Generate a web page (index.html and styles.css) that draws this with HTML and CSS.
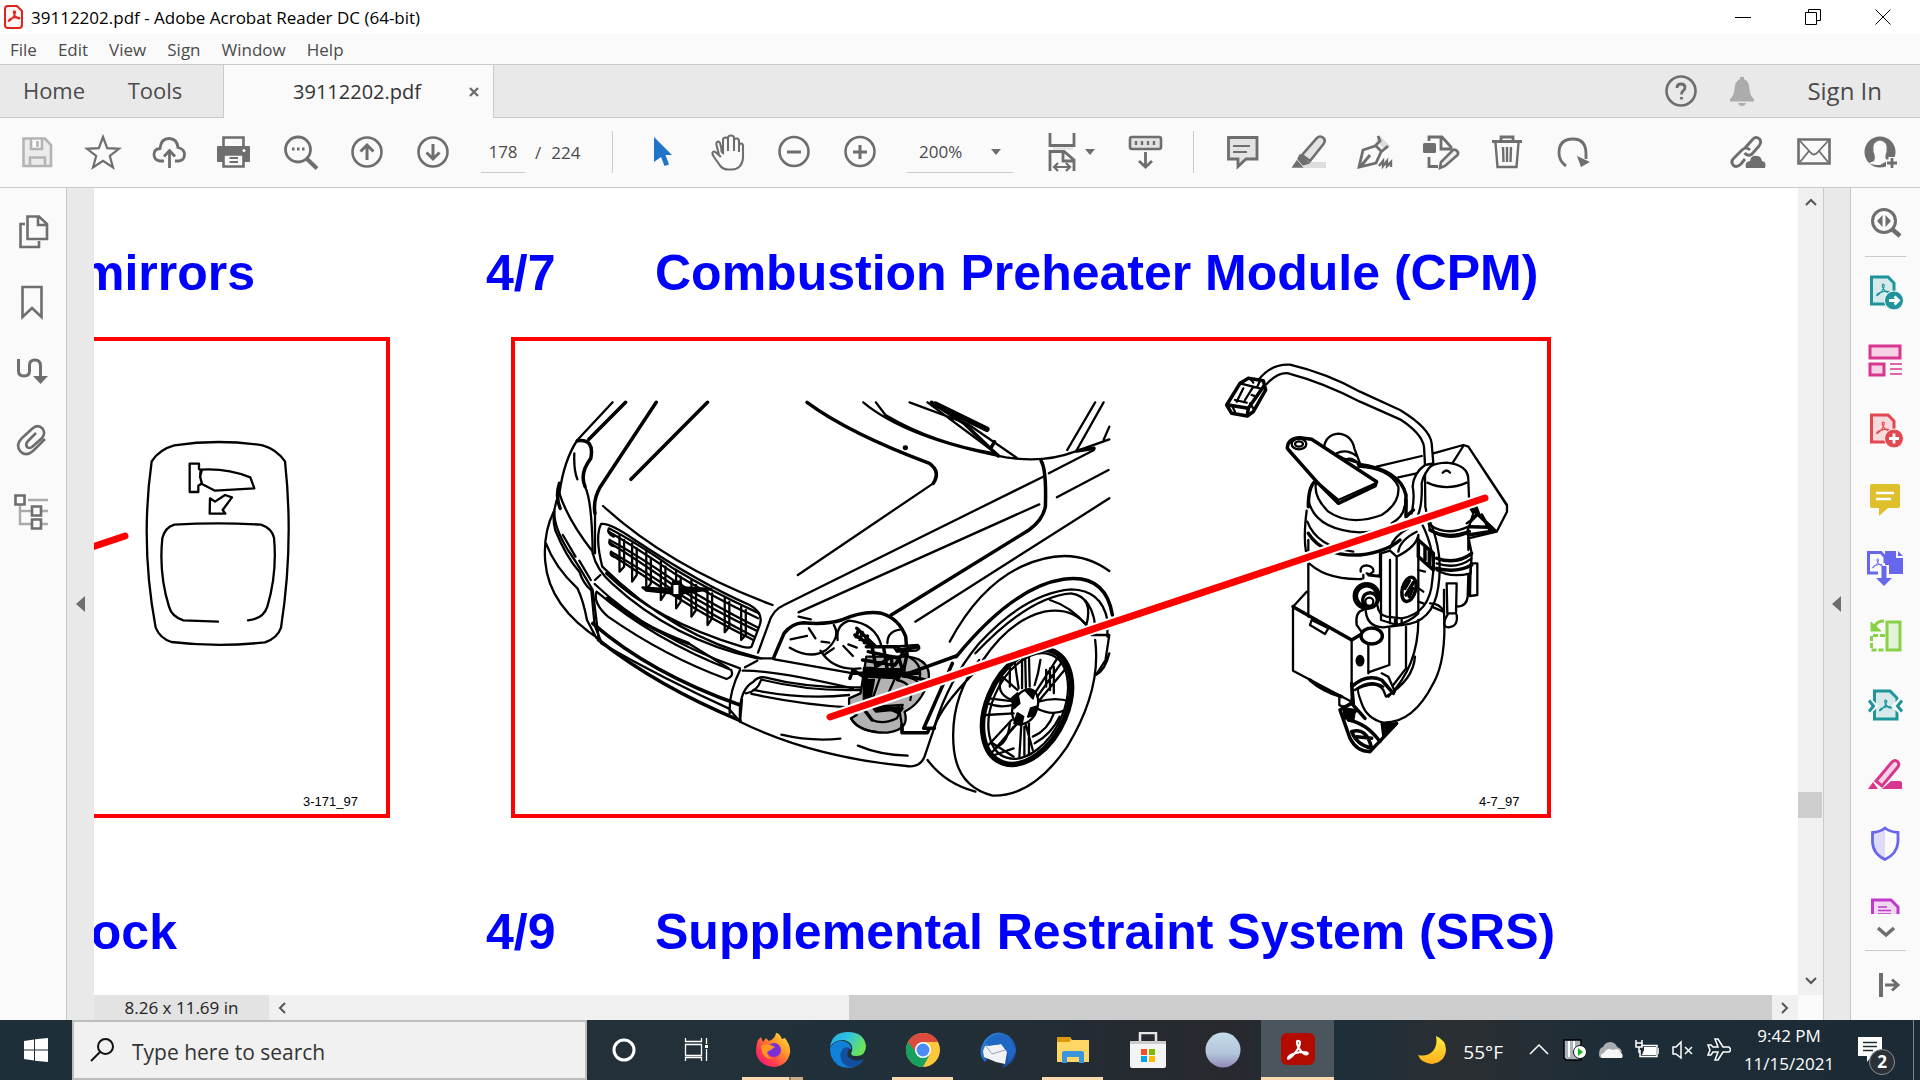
FILE: index.html
```html
<!DOCTYPE html>
<html lang="en">
<head>
<meta charset="utf-8">
<title>39112202.pdf - Adobe Acrobat Reader DC (64-bit)</title>
<link rel="stylesheet" href="styles.css">
</head>
<body>
<svg class="defs" aria-hidden="true">
  <defs>
    <path id="acro" d="M11 2C13 2 11 9 7 13C3 18 0 19 1 17C2 14 12 11 17 12C21 13 18 15 15 13C11 10 9 5 9 3Q9 1 11 2Z"/>
    <linearGradient id="ff" x1="1" y1="0" x2="0" y2="1"><stop offset="0" stop-color="#fff44f"/><stop offset=".35" stop-color="#ff9a26"/><stop offset=".7" stop-color="#ff3750"/><stop offset="1" stop-color="#e3128d"/></linearGradient>
    <linearGradient id="edge" x1="0" y1="0" x2="1" y2=".4"><stop offset="0" stop-color="#2aa4e8"/><stop offset=".5" stop-color="#2fc4df"/><stop offset="1" stop-color="#6be35a"/></linearGradient>
    <linearGradient id="orb" x1="0" y1="0" x2="0" y2="1"><stop offset="0" stop-color="#c6dce8"/><stop offset=".6" stop-color="#b3c5db"/><stop offset="1" stop-color="#9288b8"/></linearGradient>
    <linearGradient id="moon" x1="0" y1="0" x2="0" y2="1"><stop offset="0" stop-color="#ffee3a"/><stop offset="1" stop-color="#ffae1e"/></linearGradient>
    <linearGradient id="bird" x1="0" y1="0" x2="1" y2="1"><stop offset="0" stop-color="#2a8be0"/><stop offset="1" stop-color="#1a3f9c"/></linearGradient>
  </defs>
</svg>

<header class="titlebar">
  <svg class="app-icon" viewBox="0 0 20 26"><path d="M4 2H13L18 7V21Q18 24 15 24H4Q1 24 1 21V5Q1 2 4 2Z" fill="#fff5f5" stroke="#e2231a" stroke-width="2"/><use href="#acro" transform="translate(4 6) scale(.62)" fill="none" stroke="#e2231a" stroke-width="2.4"/></svg>
  <span class="app-title">39112202.pdf - Adobe Acrobat Reader DC (64-bit)</span>
  <div class="window-controls">
    <button aria-label="Minimize"><svg viewBox="0 0 16 16"><path d="M0 8.500H16" stroke="#000"/></svg></button>
    <button aria-label="Restore"><svg viewBox="0 0 16 16"><path d="M.5 3.500H11.500V15.500H.5ZM3.500 3V.5H15.500V11.500H12" fill="none" stroke="#000"/></svg></button>
    <button aria-label="Close"><svg viewBox="0 0 16 16"><path d="M.5 .5L15.500 15.500M15.500 .5L.5 15.500" stroke="#000"/></svg></button>
  </div>
</header>

<nav class="menubar">
  <button>File</button><button>Edit</button><button>View</button><button>Sign</button><button>Window</button><button>Help</button>
</nav>

<div class="tabbar">
  <button class="tab-home">Home</button>
  <button class="tab-tools">Tools</button>
  <div class="doc-tab"><span>39112202.pdf</span><button aria-label="Close tab"><svg viewBox="0 0 12 12"><path d="M2 2L10 10M10 2L2 10" stroke="#6e6e6e" stroke-width="2.400"/></svg></button></div>
  <div class="tab-right">
    <button aria-label="Help"><svg class="icon" viewBox="0 0 40 40"><circle cx="20" cy="20" r="14.500" stroke-width="2.600"/><path d="M16 17Q16 13 20 13Q24 13 24 16.500Q24 18.500 22 20Q20.500 21 20.500 23.500M20.500 26V28.600" stroke-width="2.800"/></svg></button>
    <button aria-label="Notifications"><svg class="icon" viewBox="0 0 40 40"><path d="M18 8V6H22V8Q27 10 27.500 18Q28 25 32 28V30.500H8V28Q12 25 12.500 18Q13 10 18 8ZM16 32H24Q23 35 20 35Q17 35 16 32Z" fill="#acacac" stroke="none"/></svg></button>
    <a class="sign-in" href="#">Sign In</a>
  </div>
</div>

<div class="toolbar">
  <button aria-label="Save"><svg class="icon pale" viewBox="0 0 40 40"><path d="M6.500 6.500H28L34 13V34H6.500ZM14 7V17H25V7M20.500 9V15M13 34V25.500H28V34" fill="#ececec" stroke-width="2.600"/></svg></button>
  <button aria-label="Star"><svg class="icon" viewBox="0 0 40 40"><path d="M20 5L24.200 16.200L36 16.800L26.800 24L30 35.500L20 28.800L10 35.500L13.200 24L4 16.800L15.800 16.200Z" stroke-width="2.200"/></svg></button>
  <button aria-label="Upload"><svg class="icon" viewBox="0 0 40 40"><path d="M15 29H11Q5 28 5 22.500Q5 17 11 16.500Q12 6.500 20 6.500Q28 6.500 29 15.500Q35.500 17 35.500 22.500Q35.500 28 30 29H26" stroke-width="2.800"/><path d="M20.500 36V19M15 24.500L20.500 18.500L26 24.500" stroke-width="2.800"/></svg></button>
  <button aria-label="Print"><svg class="icon" viewBox="0 0 40 40"><path d="M3 15H34V29H29V24H9V29H3Z" fill="#6e6e6e" stroke-linejoin="round" stroke-width="2"/><path d="M8.500 14V5.500H28.500V14" stroke-width="2.600"/><path d="M8.500 22.500H28.500V34.500H8.500Z" fill="#fafafa" stroke-width="2.600"/><path d="M14.500 26H23M14.500 30H23" stroke-width="1.800"/><circle cx="29" cy="18.500" r="1.500" fill="#fff" stroke="none"/></svg></button>
  <button aria-label="Find"><svg class="icon" viewBox="0 0 40 40"><circle cx="17" cy="17.500" r="12.500" stroke-width="2.800"/><path d="M26 27L36 36.500" stroke-width="4"/><path d="M11 17H13.500M16 17H18.500M21 17H23.500" stroke-width="2.800"/></svg></button>
  <button aria-label="Previous page"><svg class="icon" viewBox="0 0 40 40"><circle cx="20" cy="20" r="14.500" stroke-width="2.600"/><path d="M20 28V13M13.500 19.500L20 13L26.500 19.500" stroke-width="3"/></svg></button>
  <button aria-label="Next page"><svg class="icon" viewBox="0 0 40 40"><circle cx="20" cy="20" r="14.500" stroke-width="2.600"/><path d="M20 12V27M13.500 20.500L20 27L26.500 20.500" stroke-width="3"/></svg></button>
  <div class="page-nav"><input aria-label="Page number" value="178"><span>/</span><span>224</span></div>
  <i class="sep"></i>
  <button aria-label="Select"><svg class="icon" viewBox="0 0 40 40"><path d="M12 5L30 23H23.500L27 32.500L22.500 34L19 25L12 30Z" fill="#2074c9" stroke="none"/></svg></button>
  <button aria-label="Pan"><svg class="icon" viewBox="0 0 40 40"><path d="M13 25L8 20.500Q5.500 18.500 4.500 20.500Q4 22 6 25L12 33.500Q15 37.500 20 37.500H24Q34 37 35 26V14Q35 11.500 33 11.500Q31 11.500 31 14V20M31 17V9Q31 6.500 28.500 6.500Q26 6.500 26 9V19M26 12V6Q26 3.500 23 3.500Q20 3.500 20 6V19M20 10V8Q20 5.500 17.500 5.500Q15 5.500 15 8V21Q13 20 13.500 17L12 11Q11 9 9 10Q8 11 8.500 13L11 23" stroke-width="2.100"/></svg></button>
  <button aria-label="Zoom out"><svg class="icon" viewBox="0 0 40 40"><circle cx="20" cy="19.500" r="14.500" stroke-width="2.600"/><path d="M13 20H27" stroke-width="3"/></svg></button>
  <button aria-label="Zoom in"><svg class="icon" viewBox="0 0 40 40"><circle cx="20" cy="19.500" r="14.500" stroke-width="2.600"/><path d="M13 20H27M20 13V27" stroke-width="3"/></svg></button>
  <label class="zoom"><select aria-label="Zoom level"><option>200%</option></select><svg viewBox="0 0 10 6"><path d="M0 0H10L5 6Z" fill="#6e6e6e"/></svg></label>
  <button class="fit" aria-label="Fit width"><svg class="icon" viewBox="0 0 40 40"><path d="M8 1V13.500H32V1M8 39V19.500H22L32 28V39M21 20V29H31" stroke-width="2.800"/><path d="M13 35H27M16 31L12 35L16 39M24 31L28 35L24 39" stroke-width="2.200"/><path d="M11 16.500H31" stroke="#ddd" stroke-width="2"/></svg><svg class="caret" viewBox="0 0 10 6"><path d="M0 0H10L5 6Z" fill="#6e6e6e"/></svg></button>
  <button aria-label="Scrolling"><svg class="icon" viewBox="0 0 40 40"><rect x="5" y="5" width="31" height="12" rx="2" fill="#e3e3e3" stroke-width="2.600"/><path d="M11 9V13M17 9V13M23 9V13M29 9V13" stroke-width="2.400"/><path d="M20.500 20V35M14 29L20.500 35L27 29" stroke-width="2.800"/></svg></button>
  <i class="sep"></i>
  <button aria-label="Comment"><svg class="icon" viewBox="0 0 40 40"><path d="M5.500 5.500H34V27H23L15 34.500V27H5.500Z" fill="#e3e3e3" stroke-width="2.800"/><path d="M10 14H27M10 20H24" stroke-width="2"/></svg></button>
  <button aria-label="Highlight"><svg class="icon" viewBox="0 0 40 40"><path d="M13 36L19 30H37V36Z" fill="#ddd" stroke="none"/><path d="M13 23L28 6Q31 3 34.500 6Q37 8.500 34.500 12L21 29Z" fill="#e3e3e3" stroke-width="2.600"/><path d="M11 23L20 31L14 33L9 27ZM4 35L8 29L13 35Z" fill="#6e6e6e" stroke-width="1.500"/></svg></button>
  <button aria-label="Sign"><svg class="icon" viewBox="0 0 40 40"><path d="M24 3L35 14L31 18L21 9Z" fill="#ddd" stroke="none"/><path d="M23 4L25 9L20 14L8 18L4 35L21 31L26 20L33 14M20 13L27 20M6 34L15 23" stroke-width="2.800"/><path d="M24 34L28 29V34L32 29V34L36 30V35" stroke-width="2.400"/></svg></button>
  <button aria-label="Edit"><svg class="icon" viewBox="0 0 40 40"><rect x="2" y="11" width="13" height="10" rx="1.500" fill="#6e6e6e" stroke="none"/><path d="M8 9V5H21L30 15V17H20V6M8 25V34.500H17" stroke-width="2.800"/><path d="M19 36L20 30L32 18Q34 17 36 19Q38 21 36.500 23L24 34Z" fill="#eee" stroke-width="2.600"/></svg></button>
  <button aria-label="Delete"><svg class="icon" viewBox="0 0 40 40"><path d="M5 9.500H35M14 9V5H26V9" stroke-width="2.800"/><path d="M8.500 11L10.500 35H29.500L31.500 11M16 15L16.500 30M20 15V30M24 15L23.500 30" stroke-width="2.400"/></svg></button>
  <button aria-label="Rotate"><svg class="icon" viewBox="0 0 40 40"><path d="M13 34Q6 29 6 21Q6 7 20 7Q33 7 33 22V27" stroke-width="2.800"/><path d="M24 24L37 30L28 35Z" fill="#6e6e6e" stroke="none"/></svg></button>
  <div class="share">
    <button aria-label="Share link"><svg class="icon" viewBox="0 0 40 40"><path d="M17 16L25 7Q28 4 31.500 7Q34 10 31 14L24 22Q20 25 16.500 21M22 18Q18 14 14 18L6 26Q2 30 5.500 33.500Q9 36 13 32L17 27" stroke-width="2.900"/><path d="M18 36Q16 30 22 29Q23 23 29 24Q33 24 34 29Q39 30 37 36Z" fill="#6e6e6e" stroke="none"/></svg></button>
    <button aria-label="Email"><svg class="icon" viewBox="0 0 40 40"><path d="M4.500 7.500H35.500V31.500H4.500Z" stroke-width="2.600"/><path d="M6 9L17 21Q20 24 23 21L34 9M6 30L15 19M34 30L25 19" stroke-width="1.800"/></svg></button>
    <button aria-label="Invite people"><svg class="icon" viewBox="0 0 40 40"><circle cx="20" cy="20" r="14.500" fill="#6e6e6e" stroke-width="2"/><path d="M14 29Q16 25 13.500 20Q12 9 20 8.500Q28 9 26.500 20Q24 25 27 29L20 33Q12 33 9 31Z" fill="#fafafa" stroke="none"/><path d="M26 31H38M32 25V37" stroke="#fafafa" stroke-width="7"/><path d="M27 31H37M32 26V36" stroke-width="2.800"/></svg></button>
  </div>
</div>

<main class="workspace">
  <aside class="left-rail">
    <button aria-label="Page thumbnails"><svg class="icon" viewBox="0 0 40 40"><path d="M14.500 4.500H26L34 12V27H14.500ZM25 5V13H33" stroke-width="2.600"/><path d="M12 12H7.500V35H26V29" stroke-width="2.600"/></svg></button>
    <button aria-label="Bookmarks"><svg class="icon" viewBox="0 0 40 40"><path d="M9.500 5H28.500V35L19 26L9.500 35Z" stroke-width="2.600"/></svg></button>
    <button aria-label="Signatures"><svg class="icon" viewBox="0 0 40 40"><path d="M5.500 7V19Q5.500 24 11 24Q16.500 24 16.500 19V13Q16.500 8 22 8Q27.500 8 27.500 14V24" stroke-width="3"/><path d="M20 24H35L27.500 32Z" fill="#6e6e6e" stroke="none"/></svg></button>
    <button aria-label="Attachments"><svg class="icon" viewBox="0 0 40 40"><path d="M32 17L20 29Q13 35 7.500 29.500Q2 23 9 16L20 6Q25 2 29.500 6.500Q33 11 29 16L19 25Q16 27 14 25Q12 22 15 19L23 11" stroke-width="2.600"/></svg></button>
    <button aria-label="Layers"><svg class="icon" viewBox="0 0 40 40"><path d="M15 8H35M7 13V32H18M7 19H18M29 19H35M29 32H35" stroke="#aaa" stroke-width="2.400"/><path d="M2.500 3.500H11.500V12.500H2.500ZM19 14.500H28V23.500H19ZM19 27.500H28V36.500H19Z" stroke-width="2.600"/></svg></button>
  </aside>
  <button class="pane-toggle left" aria-label="Expand navigation pane"><svg viewBox="0 0 10 16"><path d="M9 0V16L0 8Z" fill="#6e6e6e"/></svg></button>

  <div class="viewer">
    <div class="page-view">
      <section class="col-a">
        <h2 class="cut wide"><span>mirrors</span></h2>
        <figure class="panel open">
          <svg viewBox="94 341 292 473">
            <g class="ink" transform="translate(0 190) scale(.33333)">
              <path d="M455 814Q478 778 523 766Q655 746 788 766Q830 778 855 814Q882 1062 843 1313Q832 1345 795 1357Q655 1373 514 1356Q480 1345 467 1313Q420 1062 455 814Z"/>
              <path d="M654 1295L550 1291Q515 1280 507 1250Q476 1150 487 1045Q495 1012 523 1004Q655 996 783 1004Q815 1015 822 1043Q832 1150 802 1250Q790 1287 744 1291"/>
              <path d="M569 821H597V837L605 843L600 860L606 880L595 887V906H569ZM603 839Q680 834 751 862L763 895L645 902L606 882Q597 858 603 839"/>
              <path d="M630 925L645 935L675 915L696 922L668 960L676 971H629Z"/>
            </g>
            <path class="leader" d="M80 551L125 536"/>
            <text x="303" y="806" class="fig-no">3-171_97</text>
          </svg>
        </figure>
        <h2 class="cut narrow"><span>ock</span></h2>
      </section>
      <section class="col-b">
        <h2><span class="ref">4/7</span><span>Combustion Preheater Module (CPM)</span></h2>
        <figure class="panel">
          <svg viewBox="515 341 1032 473">
            <g class="ink" transform="translate(520 380) scale(.38267 .33333)">
              <!-- bonnet and windscreen -->
              <path d="M242 67L150 180Q115 240 103 340M276 67L182 175" />
              <path class="b" d="M356 67L210 320Q190 360 196 400M276 67L180 178M490 67L290 298"/>
              <path d="M196 395V520"/>
              <path class="b" d="M750 67Q860 160 1070 250Q1100 275 1080 310"/>
              <path d="M1080 310L726 585M217 378Q390 560 660 675"/>
              <path d="M897 67Q1010 175 1270 232Q1370 250 1450 215L1540 178M930 67L955 105Q1080 190 1240 220M1018 67L1170 132L1300 235M1065 67L1250 225M1430 210L1503 67M1455 210L1525 67M1525 180L1540 140"/>
              <path class="bb" d="M1085 72L1220 148"/>
              <path class="b" d="M1075 67L1160 130L1250 228M1240 185L1230 205M1455 213L1500 205"/>
              <circle cx="1007" cy="203" r="4" fill="#000"/>
              <path class="b" d="M1362 243Q1376 270 1373 380Q1366 420 1330 450L970 705"/>
              <path d="M1382 280L1500 210M1367 290L690 675Q660 690 650 730L622 818M1357 373L728 697M1403 352L1538 270M1540 355L1033 725"/>
              <!-- left flank -->
              <path class="b" d="M150 182Q195 175 185 235Q155 280 170 320M103 310Q92 350 105 385"/>
              <path d="M170 320Q188 360 190 520M142 220Q140 270 150 298M103 340Q125 420 190 515M88 395Q60 460 66 545Q75 680 210 780M90 395Q88 440 125 510Q150 550 190 630L205 770M112 465L145 530M68 490Q90 560 150 625Q165 660 175 720L200 775M155 542L185 600M196 600L210 585"/>
              <path d="M103 340Q80 400 92 450Q120 530 155 575Q165 610 185 630"/>
              <!-- grille surround -->
              <path d="M630 835Q400 770 215 560Q195 470 212 432Q235 428 300 480Q470 610 600 675Q640 700 625 740L605 800Q600 806 580 800Q350 720 225 580"/>
              <path d="M190 520Q200 570 240 610Q400 780 620 835L665 835"/>
              <!-- grille bars -->
              <path d="M232 445Q300 485 400 565Q500 635 625 700M232 455Q300 500 400 578Q500 648 622 715M234 480Q300 520 400 600Q500 672 620 742M236 490Q300 535 400 615Q500 688 618 752M238 515Q320 570 400 630Q500 705 612 770M240 525Q320 585 400 645Q500 718 610 780M232 445Q226 460 245 470M235 480Q228 495 250 500M238 515Q232 530 260 535"/>
              <path d="M260 465V575L272 560V480M293 490V605L305 585V505M330 515V630L342 610V535M368 545V660L380 640V560M408 570V685L420 665V590M448 600V710L460 690V615M490 628V735L502 715V640M535 655V757L547 740V665M578 680V780L590 765V690"/>
              <path d="M320 622L395 628L400 605H418L425 622L500 627L425 640L415 655L396 640L330 632Z" fill="#000"/>
              <path d="M401 615H414V642H401Z" fill="#fff" stroke="none"/>
              <!-- bumper -->
              <path d="M195 612Q340 770 575 865M200 635Q190 670 230 710Q380 830 540 897Q560 890 552 870Q350 780 200 635"/>
              <path class="b" d="M228 655Q310 735 440 790M190 730Q340 880 575 975M205 780Q360 920 575 1022"/>
              <path d="M440 790L545 865M212 790Q380 900 545 985L575 1025L580 960M575 870Q545 940 548 1000M186 625L195 735L210 780M588 862L620 842M582 872Q660 870 870 925"/>
              <path d="M575 1020Q570 930 610 905Q620 890 640 892Q750 925 890 922M635 900Q760 935 890 930M610 930Q740 960 860 945M605 942Q740 975 860 982M590 940Q620 935 630 900M665 838L860 878"/>
              <path d="M575 1025Q760 1130 1010 1158Q1050 1165 1060 1120L1085 1035M683 1064Q760 1085 837 1076M883 1097Q940 1125 1013 1127"/>
              <!-- headlamp -->
              <path class="b" d="M662 835L690 760Q710 730 740 728Q800 735 840 720Q900 690 945 700Q990 715 1008 770L1015 880"/>
              <path d="M728 710L760 718M707 778L750 768M755 745L772 775M705 803Q760 840 800 810Q840 770 820 735M830 780Q825 735 860 722Q930 730 945 800M785 812Q820 875 890 865M788 785L808 788M845 798L870 828M798 822L820 805M960 790Q960 750 1000 748M858 793L880 803"/>
              <!-- heater unit behind the bumper -->
              <path d="M975 800L1040 795Q1050 805 1035 812L985 815ZM1015 830Q1075 840 1068 900Q1050 970 1005 995Q1020 1050 960 1058Q890 1060 865 1015L880 1005L860 990L860 955L890 940L905 830Z" fill="#b2b2b2"/>
              <path class="b" d="M880 745L930 800M875 765L915 795M885 750L878 770M895 758L888 778M908 768L900 788M905 800H985L1010 830L1000 885L1060 900M910 815L990 835L1000 870L900 865V990L920 1020M895 840L980 855L1000 820M920 800L930 860L970 830L975 880M865 880H1040M862 895L870 870L905 895M905 910L900 985M950 800L960 870M1040 800L985 812"/>
              <path d="M940 895L920 960H955L980 895M1000 890Q1050 895 1045 930M985 900Q1030 910 1020 960M930 980L1000 975L985 1015Q950 1035 920 1020M865 1015Q880 1050 930 1055M1015 830Q1050 850 1045 890M990 980L1000 1050"/>
              <path d="M905 870H1005L990 895L905 890ZM905 900H925L912 980H902ZM920 980L1000 985L990 1000L970 990L930 995Z" fill="#000"/>
              <path class="b" d="M1015 880L1140 828M998 1035V1058H1065L1070 1045M1130 850L1055 1045H1083"/>
              <!-- wheel arch -->
              <path d="M1540 573Q1440 490 1310 560Q1200 620 1123 785"/>
              <path class="b" d="M1548 705Q1530 580 1420 598Q1290 620 1140 830"/>
              <path d="M1535 720Q1520 630 1440 628Q1320 640 1200 790Q1120 900 1083 1040M1440 640Q1500 650 1505 760M1440 640Q1330 650 1190 820M1480 735Q1500 650 1440 640M1385 660Q1440 680 1480 735"/>
              <path d="M1480 735Q1440 680 1370 695Q1280 720 1210 840"/>
              <!-- tyre and rim -->
              <path d="M1200 840Q1120 960 1134 1110Q1145 1220 1235 1247Q1340 1250 1430 1100Q1520 930 1503 780M1065 1140Q1110 1210 1190 1235M1185 880Q1100 980 1083 1040M1493 765H1540L1530 840L1505 885M1540 820Q1530 870 1505 885M1535 720V770"/>
              <ellipse class="bb" cx="1325" cy="980" rx="105" ry="180" transform="rotate(20 1325 980)"/>
              <ellipse cx="1328" cy="978" rx="93" ry="165" transform="rotate(20 1328 978)"/>
              <ellipse cx="1320" cy="980" rx="32" ry="54" transform="rotate(16 1320 980)"/>
              <path d="M1303 925L1292 840M1312 925V830M1332 920L1330 825M1322 925L1320 825M1345 940L1410 825M1352 950L1420 840M1358 960L1430 860M1295 965L1225 955M1290 975Q1250 985 1222 970M1290 1000L1218 1005M1285 1020L1220 1100M1300 1030L1235 1115M1290 1040L1245 1105M1310 1035L1305 1130M1318 1040V1125M1330 1030V1125M1322 1035L1340 1110M1350 985Q1390 1010 1425 990M1355 965Q1400 950 1438 965M1375 920V870M1395 940V860M1385 930V865"/>
              <path d="M1300 930L1260 890Q1240 940 1285 960M1280 920V850M1340 1070Q1380 1050 1395 1000M1345 1090Q1390 1060 1410 1010M1245 1100Q1275 1090 1280 1030M1240 1125L1290 1105M1360 840Q1355 880 1345 915M1235 1090L1290 1130"/>
              <path d="M1285 955L1300 940L1305 970L1290 985ZM1320 930L1345 935L1340 955ZM1300 1000L1315 1010L1310 1035L1292 1030ZM1335 985L1350 980L1345 1005L1328 1010Z" fill="#000"/>
            </g>
            <g class="ink" transform="translate(1200 340) scale(.33333)">
              <!-- mounting bracket behind -->
              <path d="M530 380L665 348M595 412L660 398M700 340L790 315L805 320L921 495V515L890 575L805 595M790 318L757 370M805 320L920 495"/>
              <path class="b" d="M820 510L885 572L805 585M820 480L835 520L800 555M845 525L870 570M810 560L870 562"/>
              <!-- cable -->
              <path d="M175 120Q215 70 270 74Q380 100 480 155L600 210Q690 265 695 310L700 370M200 132Q235 95 265 100Q370 128 480 185L600 238Q665 280 672 320L675 375"/>
              <path class="b" d="M80 195L120 130L145 115L190 122L197 150L160 215L142 228L95 220ZM85 195L145 205L142 225M145 205L190 140"/>
              <path d="M110 185L130 145M120 130L180 145M135 180L160 140M95 195L105 215M150 115L160 128M180 122L172 140M105 180L140 188M155 165L170 170M150 190L160 205"/>
              <!-- lid and arm -->
              <path d="M372 325Q375 285 415 281Q455 285 463 325L480 370L430 355ZM410 340Q440 325 472 350M425 365Q450 345 475 370" fill="#fff"/>
              <path class="b" d="M345 425Q325 440 325 500M475 373Q600 390 618 465L617 500"/>
              <path d="M348 430Q340 470 385 515Q450 560 545 525Q600 490 595 440Q570 385 475 380M325 480Q345 570 480 577Q540 575 560 565M575 550Q610 530 613 500M320 512Q310 590 318 635"/>
              <path class="b" d="M325 580Q370 650 480 645Q560 635 600 600"/>
              <path d="M322 545Q350 620 460 635M325 600V830M318 660Q370 720 485 717M500 700Q525 710 540 705"/>
              <path class="b" d="M262 325Q262 295 300 293L335 298L530 425L525 438L415 490L350 425Z" fill="#fff"/>
              <ellipse cx="297" cy="312" rx="22" ry="16"/><ellipse cx="297" cy="312" rx="12" ry="8"/>
              <path d="M264 330L350 425L415 480L527 430"/>
              <!-- side canister -->
              <path d="M675 410Q675 370 740 368Q806 375 805 420L808 500L820 520L800 580Q740 605 690 570L676 500Z" fill="#fff"/>
              <path d="M682 428Q740 455 800 428M728 398Q740 385 750 398"/>
              <path class="b" d="M690 570Q740 600 808 575M710 655Q770 675 815 640M710 685Q770 700 815 675"/>
              <path d="M690 555Q740 590 805 560M805 590L815 640L812 700Q750 715 710 690M710 670Q770 690 815 655M805 590V630M812 500L830 515M800 550L820 535"/>
              <path d="M812 670H832V765L810 768ZM740 730H770L768 820H742ZM745 820Q720 860 745 862Q775 860 770 825M805 705L803 770Q800 800 770 800M732 815V750"/>
              <path d="M635 520Q645 470 638 440Q640 400 675 375L700 370Q670 400 665 430Q668 500 650 535" fill="#fff"/>
              <path class="b" d="M618 480V530L640 510"/>
              <!-- hoses -->
              <path d="M665 550Q710 640 697 720Q690 820 605 835M690 545Q730 640 715 740Q700 850 605 855M570 625Q580 590 625 565M595 635Q600 600 650 575"/>
              <path class="b" d="M655 600L700 640V690L655 650ZM675 620V660M688 630V675"/>
              <!-- valve block -->
              <path d="M543 640L570 632L590 650V855M543 640V840L590 855M570 660V850M590 650Q650 620 655 585V820Q630 845 590 855M540 640V710"/>
              <ellipse class="b" cx="627" cy="748" rx="20" ry="37" transform="rotate(15 627 748)"/><path class="b" d="M618 765L640 728M628 770L638 745M615 745L628 722"/>
              <path d="M482 695Q480 677 500 676Q523 680 520 695L505 706L540 710M490 705V715M655 690L675 695M655 745L670 755M655 785L670 790"/>
              <!-- clamp and elbow -->
              <circle class="bb" cx="500" cy="768" r="34"/><circle class="b" cx="510" cy="780" r="22" fill="#fff"/><circle cx="508" cy="785" r="12"/>
              <path d="M497 800Q495 860 550 862L605 855V835L560 830Q535 825 532 795M490 810Q465 815 470 855L488 880M585 835V858"/>
              <ellipse class="b" cx="515" cy="888" rx="32" ry="24" fill="#fff"/>
              <!-- control box -->
              <path class="b" d="M279 800L455 900M455 900L480 885"/>
              <path d="M455 900V1085M279 800L320 755M279 805V992L455 1085M505 915V1000M568 865V975L505 997M335 840L330 855L375 882L385 865Z"/>
              <ellipse cx="480" cy="962" rx="10" ry="14" fill="#000"/>
              <path class="b" d="M330 1020Q370 1055 425 1070"/>
              <path d="M618 860V985L580 1035M655 840Q655 980 565 1070M732 815Q740 960 700 1030Q640 1150 550 1148Q500 1135 485 1090Q470 1050 475 1045Q530 1020 550 1050L558 1070Q640 1020 645 950"/>
              <path class="b" d="M455 1040Q500 1000 545 1020L580 1060M455 1030L460 1090"/>
              <path d="M545 1000L565 1010L585 1055M465 1050Q510 1015 550 1040M690 790Q720 790 732 815M695 800L730 815"/>
              <path class="b" d="M420 1110L455 1090L495 1135M420 1110L450 1195Q470 1235 510 1235L590 1150M445 1140Q500 1150 540 1205M455 1175Q500 1160 515 1225Q470 1215 455 1175M470 1190L515 1195M450 1125L470 1110"/>
              <path d="M545 1150H590L550 1190ZM430 1105L465 1110L460 1140L435 1135Z" fill="#000"/>
              <path d="M418 1070V1095Q430 1105 450 1090"/>
            </g>
            <path class="halo" d="M830 717L1485 498"/>
            <path class="leader" d="M830 717L1485 498"/>
            <text x="1479" y="806" class="fig-no">4-7_97</text>
          </svg>
        </figure>
        <h2><span class="ref">4/9</span><span>Supplemental Restraint System (SRS)</span></h2>
      </section>
    </div>
    <div class="vscroll">
      <button aria-label="Scroll up"><svg class="arrow" viewBox="0 0 12 12"><path d="M1 9L6 4L11 9"/></svg></button>
      <div class="vtrack"><i></i></div>
      <button aria-label="Scroll down"><svg class="arrow" viewBox="0 0 12 12"><path d="M1 3L6 8L11 3"/></svg></button>
    </div>
    <div class="hscroll">
      <span class="page-size">8.26 x 11.69 in</span>
      <button aria-label="Scroll left"><svg class="arrow" viewBox="0 0 12 12"><path d="M9 1L4 6L9 11"/></svg></button>
      <div class="htrack"><i></i></div>
      <button aria-label="Scroll right"><svg class="arrow" viewBox="0 0 12 12"><path d="M3 1L8 6L3 11"/></svg></button>
    </div>
  </div>

  <button class="pane-toggle right" aria-label="Expand tools pane"><svg viewBox="0 0 10 16"><path d="M9 0V16L0 8Z" fill="#6e6e6e"/></svg></button>
  <aside class="right-rail">
    <button class="find" aria-label="Find tool"><svg class="icon" viewBox="0 0 40 40"><circle cx="18" cy="18" r="11.500" stroke-width="3"/><path d="M26 26L34 33" stroke-width="4.500"/><path d="M16.500 12V24L11 18ZM19.500 12V24L25 18Z" fill="#6e6e6e" stroke="none"/></svg></button>
    <button aria-label="Export PDF"><svg class="icon teal" viewBox="0 0 40 40"><path d="M6.500 5H23L29 11V32H6.500Z" class="tint" stroke-width="3"/><use href="#acro" transform="translate(11 11) scale(.7)" stroke-width="1.600"/><circle cx="29" cy="28.500" r="9.500" class="disc"/><path d="M24 28.500H33M29.500 24.500L33.500 28.500L29.500 32.500" stroke="#fff" stroke-width="2.800"/></svg></button>
    <button aria-label="Organize pages"><svg class="icon pink" viewBox="0 0 40 40"><path d="M5 5H35V17H5ZM5 23H19V34H5Z" class="tint" stroke-width="3"/><path d="M25 23H37M25 28H37M25 33H37" stroke-width="1.500"/></svg></button>
    <button aria-label="Create PDF"><svg class="icon red" viewBox="0 0 40 40"><path d="M6.500 5H23L29 11V32H6.500Z" class="tint" stroke-width="3"/><use href="#acro" transform="translate(11 11) scale(.7)" stroke-width="1.600"/><circle cx="29" cy="28.500" r="9.500" class="disc"/><path d="M24 28.500H34M29 23.500V33.500" stroke="#fff" stroke-width="2.800"/></svg></button>
    <button aria-label="Comment tool"><svg class="icon" viewBox="0 0 40 40"><path d="M7 5H33Q35 5 35 7V27Q35 29 33 29H23L14 37V29H7Q5 29 5 27V7Q5 5 7 5Z" fill="#dfbf2b" stroke="none"/><path d="M11 14H29M11 20H26" stroke="#fff" stroke-width="2.500"/></svg></button>
    <button aria-label="Combine files"><svg class="icon violet" viewBox="0 0 40 40"><path d="M20 3H31V10H38V26H24V17H20ZM33 3L38 8H33Z" fill="#6767ee" stroke="none"/><path d="M13 25H3.500V4.500H16L20 9V15" stroke-width="3"/><use href="#acro" transform="translate(7 10) scale(.55)" stroke-width="1.800"/><path d="M19 18V30" stroke-width="5"/><path d="M11 30H27L19 38Z" fill="#6767ee" stroke="none"/></svg></button>
    <button aria-label="Rotate pages"><svg class="icon green" viewBox="0 0 40 40"><path d="M22 5H35V33H22Z" class="tint" stroke-width="3"/><path d="M20 18.500H6.500V33H20" stroke-width="3" stroke-dasharray="5 2"/><path d="M19 4Q12 4 10 9" stroke-width="3"/><path d="M6 5V14H16Z" fill="#86d145" stroke-width="1"/></svg></button>
    <button aria-label="Compress PDF"><svg class="icon teal" viewBox="0 0 40 40"><path d="M9.500 5H25L32 12V33H9.500Z" class="tint" stroke-width="3"/><path d="M2 14L8 20L2 26M38 14L32 20L38 26" stroke="#fafafa" stroke-width="8"/><use href="#acro" transform="translate(14 13) scale(.65)" stroke-width="2"/><path d="M4 14.500L8.500 20L4 25.500M37 14.500L32.500 20L37 25.500" stroke-width="3"/></svg></button>
    <button aria-label="Redact"><svg class="icon pink" viewBox="0 0 40 40"><path d="M11 26L27 7Q30 4 33 7Q35 10 32 13L17 31Z" class="tint" stroke-width="3"/><path d="M3 34L8 27L13 34ZM17 34L26 26H35Q37 26 37 28V34Z" fill="#d83790" stroke="none"/></svg></button>
    <button aria-label="Protect"><svg class="icon violet" viewBox="0 0 40 40"><path d="M20 4V35Q8 29 7.500 18V8Q15 8 20 4Z" fill="#dcdcf9" stroke="none"/><path d="M20 4Q25 8 33 8.500V18Q32 30 20 35.500Q8 30 7.500 18V8.500Q15 8 20 4Z" stroke-width="2.800"/></svg></button>
    <button class="partial" aria-label="More forms"><svg class="icon purple" viewBox="0 0 40 40"><path d="M7.500 5H26L33 12V35H7.500Z" class="tint" stroke-width="3"/><path d="M13 12H22M13 15.500H26M13 19H26" stroke-width="1.500"/></svg></button>
    <button class="more" aria-label="More tools"><svg class="icon" viewBox="0 0 40 40"><path d="M12 16L20 23L28 16" stroke-width="3.500"/></svg></button>
    <button class="collapse" aria-label="Collapse tools"><svg class="icon" viewBox="0 0 40 40"><path d="M16 7V31" stroke-width="4"/><path d="M20 19H33M27 13.500L33 19L27 24.500" stroke-width="3"/></svg></button>
  </aside>
</main>

<footer class="taskbar">
  <button class="start" aria-label="Start"><svg viewBox="0 0 24 24"><path d="M0 3L10 1.500V11.500H0ZM11 1.300L24 0V11.500H11ZM0 12.500H10V22.500L0 21ZM11 12.500H24V24L11 22.700Z" fill="#fff"/></svg></button>
  <label class="search"><svg viewBox="0 0 24 24"><circle cx="15.500" cy="8.500" r="7.500"/><path d="M10 14L1 23"/></svg><input type="text" placeholder="Type here to search" aria-label="Type here to search"></label>
  <button class="cortana" aria-label="Cortana"><svg class="app" viewBox="0 0 36 36"><circle cx="18" cy="18" r="10" fill="none" stroke="#fff" stroke-width="3"/></svg></button>
  <button aria-label="Task view"><svg class="app" viewBox="0 0 36 36"><path d="M5.500 6V9.500H21.500V6M5.500 12.500H21.500V23.500H5.500ZM5.500 29V25.500H21.500V29M26.500 6V12M26.500 17V29" fill="none" stroke="#fff" stroke-width="1.300"/><rect x="25" y="13" width="3" height="3" fill="#fff"/></svg></button>
  <button class="running multi" aria-label="Firefox"><svg class="app" viewBox="0 0 36 36"><path d="M3 8L6 5L8 10L11 6L14 9Q20 7 21 1Q24 0 27 7L30 6Q36 14 35 21Q32 34 19 35Q4 34 1 21Q1 13 3 8Z" fill="url(#ff)"/><circle cx="19" cy="18" r="7" fill="#7a2fd6"/><path d="M6 14Q12 10 20 15Q16 18 12 20Q12 25 18 27Q10 28 7 20Z" fill="#ff9626"/></svg></button>
  <button aria-label="Edge"><svg class="app" viewBox="0 0 36 36"><path d="M0 15Q2 0 18 0Q34 0 36 14Q36 24 26 24Q19 24 22 19Q24 10 13 8Q4 8 0 15Z" fill="url(#edge)"/><path d="M0 16Q5 7 14 9Q22 12 21 17Q16 15 14 21Q14 30 25 35Q7 39 1 24Q0 20 0 16Z" fill="#1181d8"/><path d="M12 18Q8 24 13 31Q17 36 24 35Q31 33 34 27Q27 30 21 27Q14 23 20 16Q14 14 12 18Z" fill="#124f9e"/></svg></button>
  <button class="running" aria-label="Chrome"><svg class="app" viewBox="0 0 36 36"><circle cx="18" cy="18" r="17" fill="#fcc83c"/><path d="M3 10Q8 1 18 1Q29 1 33 10H18L10 20Z" fill="#dd4b3e"/><path d="M3 10Q-2 20 5 29Q10 35 18 35L25 22L18 24L11 20Z" fill="#17a05e"/><circle cx="18" cy="18" r="8" fill="#fff"/><circle cx="18" cy="18" r="6.500" fill="#4b8bf4"/></svg></button>
  <button aria-label="Thunderbird"><svg class="app" viewBox="0 0 36 36"><path d="M12 2Q20 -2 29 4Q37 11 36 21Q34 32 22 36Q28 28 24 22L8 26L5 30Q-1 24 1 16Q4 6 12 2Z" fill="url(#bird)"/><path d="M5 14L21 12L27 20L25 32L16 30L4 25L3 19Z" fill="#f1f2f6"/><path d="M6 14L12 22L25 18" fill="none" stroke="#9aa0b8"/><path d="M6 10Q15 -2 28 5L36 18Q32 28 28 30Q30 20 22 12L8 14Z" fill="#2367c4"/></svg></button>
  <button class="running" aria-label="File Explorer"><svg class="app" viewBox="0 0 36 36"><path d="M2 6Q2 5 3 5H15L17 8H34V30H2Z" fill="#ffd766"/><path d="M2 5H15L16 8L14 10H2Z" fill="#dc9a0c"/><path d="M7 31V21Q7 19 9 19H27Q29 19 29 21V31H24V25H12V31Z" fill="#3a95dc"/></svg></button>
  <button aria-label="Microsoft Store"><svg class="app" viewBox="0 0 36 36"><path d="M10 12V1H26V12" fill="none" stroke="#e6e6e6" stroke-width="2.500"/><path d="M0 9H36V34Q36 36 34 36H2Q0 36 0 34Z" fill="#f4f4f4"/><path d="M0 9H36V12H0Z" fill="#ccc"/><path d="M11 17H17V23H11Z" fill="#f25022"/><path d="M19 17H25V23H19Z" fill="#7fba00"/><path d="M11 24H17V30H11Z" fill="#00a4ef"/><path d="M19 24H25V30H19Z" fill="#ffb900"/></svg></button>
  <button aria-label="Weather app"><svg class="app" viewBox="0 0 36 36"><circle cx="18" cy="18" r="17.500" fill="url(#orb)"/></svg></button>
  <button class="active" aria-label="Acrobat Reader"><svg class="app" viewBox="0 0 36 36"><rect x="1" y="1" width="34" height="32" rx="6" fill="#b30b00"/><use href="#acro" transform="translate(7 7) scale(1.100)" fill="none" stroke="#fff" stroke-width="1.900"/></svg></button>
  <div class="tray">
    <button class="weather"><svg viewBox="0 0 28 28"><path d="M18 0Q28 4 28 14Q27 26 14 28Q3 27 0 19Q9 21 15 15Q20 9 18 0Z" fill="url(#moon)"/></svg><span>55°F</span></button>
    <button class="tray-icon" aria-label="Show hidden icons"><svg viewBox="0 0 24 24"><path d="M3 16L12 7L21 16" class="line"/></svg></button>
    <button class="tray-icon" aria-label="Device"><svg viewBox="0 0 24 24"><path d="M1 2H18V22H3L1 20Z" fill="#aab2bc" stroke="#000" stroke-width="1.500"/><path d="M6 3V19M11 3V14" stroke="#fff" stroke-width="2"/><circle cx="17" cy="14" r="6.500" fill="#fff" stroke="#111"/><path d="M15 10V18L20 14Z" fill="#10b51b"/></svg></button>
    <button class="tray-icon" aria-label="OneDrive"><svg viewBox="0 0 24 24"><path d="M0 16Q0 10 4 9Q6 4 12 4Q17 5 18 9Q22 10 23 14L10 20H3Q0 20 0 16Z" fill="#a9adb0"/><path d="M3 20Q0 16 5 15Q8 9 14 12Q20 9 21 14Q25 16 23 20Z" fill="#f6f6f6"/></svg></button>
    <button class="tray-icon" aria-label="Battery"><svg viewBox="0 0 24 24"><path d="M6 7.500H22V18.500H5V12M24 10V16" class="line"/><path d="M9 9H21V17H7L9 12Z" fill="#fff"/><path d="M1 2V5H7V2M1 5V9H7V5M4 9V15" class="line"/></svg></button>
    <button class="tray-icon" aria-label="Muted"><svg viewBox="0 0 24 24"><path d="M2 9V16H5L10 20V4L5 9ZM14 9L21 16M21 9L14 16" class="line"/></svg></button>
    <button class="tray-icon" aria-label="Airplane mode"><svg viewBox="0 0 24 24"><path d="M8 1H11L16 9H22Q25 12 22 14H16L11 22H8L11 14H6L4 17H1L3 12L1 7H4L6 9H11Z" class="line"/></svg></button>
    <button class="clock"><span>9:42 PM</span><span>11/15/2021</span></button>
    <button class="notify" aria-label="2 notifications"><svg viewBox="0 0 26 26"><path d="M0 0H24V19H14L9 25V19H0Z" fill="#fff"/><path d="M5 5.500H19M5 9.500H19M5 13.500H15" stroke="#222c33" stroke-width="1.500"/></svg><b>2</b></button>
  </div>
</footer>
</body>
</html>
```
FILE: styles.css
```css
* { box-sizing: border-box; }
html, body { height: 100%; }
body {
  margin: 0;
  display: flex;
  flex-direction: column;
  overflow: hidden;
  background: #fafafa;
  color: #4b4b4b;
  font-family: "Open Sans", "Noto Sans", sans-serif;
}
button, input, select {
  font: inherit;
  color: inherit;
  background: none;
  border: 0;
  margin: 0;
  padding: 0;
}
button { display: flex; align-items: center; justify-content: center; flex: none; }
svg { display: block; flex: none; }
.defs { position: absolute; width: 0; height: 0; }

.icon { width: 40px; height: 40px; fill: none; stroke: #6e6e6e; }
.icon.pale { stroke: #b4b4b4; }
.icon.teal { stroke: #1e959b; }
.icon.teal .tint { fill: #d6eaeb; }
.icon.teal .disc { fill: #1e959b; }
.icon.pink { stroke: #d83790; }
.icon.pink .tint { fill: #f5d2e6; }
.icon.red { stroke: #e34850; }
.icon.red .tint { fill: #f9dadc; }
.icon.red .disc { fill: #e34850; }
.icon .disc { stroke: #fafafa; stroke-width: 1; }
.icon.violet { stroke: #6767ee; }
.icon.green { stroke: #86d145; }
.icon.green .tint { fill: #e3f1d8; }
.icon.purple { stroke: #c038cc; }
.icon.purple .tint { fill: #f0d8f2; }

/* Title bar and menus */
.titlebar {
  flex: none;
  height: 34px;
  display: flex;
  align-items: center;
  background: #fff;
  color: #000;
  padding-left: 4px;
}
.app-icon { width: 20px; height: 26px; }
.app-title { margin-left: 7px; font-size: 17px; }
.window-controls { margin-left: auto; padding-right: 2px; display: flex; align-self: stretch; }
.window-controls button { width: 70px; }
.window-controls svg { width: 16px; height: 16px; }
.menubar {
  flex: none;
  height: 31px;
  display: flex;
  align-items: center;
  gap: 21px;
  padding: 0 10px;
  border-bottom: 1px solid #cacaca;
  font-size: 17px;
}

/* Tabs */
.tabbar {
  flex: none;
  height: 53px;
  display: flex;
  background: #e9e9e9;
  box-shadow: inset 0 -1px #cacaca;
  font-size: 22px;
}
.tab-home, .tab-tools { padding-bottom: 3px; }
.tab-home { width: 108px; }
.tab-tools { width: 94px; margin-right: 21px; }
.doc-tab {
  width: 271px;
  display: flex;
  align-items: center;
  justify-content: flex-end;
  background: #fafafa;
  border: solid #cacaca;
  border-width: 0 1px;
  font-size: 20px;
  color: #333;
}
.doc-tab button { margin: 0 13px 0 47px; }
.doc-tab svg { width: 12px; height: 12px; }
.tab-right { margin-left: auto; display: flex; align-items: center; padding: 0 38px 2px 0; gap: 21px; }
.sign-in { margin-left: 24px; color: inherit; font-size: 24px; text-decoration: none; }

/* Toolbar */
.toolbar {
  flex: none;
  height: 70px;
  display: flex;
  align-items: center;
  padding: 0 7px 1px 4px;
  border-bottom: 1px solid #cacaca;
  font-size: 17px;
}
.toolbar > button, .share button { width: 66px; height: 66px; }
.page-nav { display: flex; align-items: center; margin-left: 15px; width: 131px; flex: none; }
.page-nav input {
  width: 44px;
  height: 42px;
  border-bottom: 1px solid #cacaca;
  text-align: center;
}
.page-nav span { margin-left: 10px; }
.sep { flex: none; width: 1px; height: 42px; background: #cacaca; margin: 0 16px 0 0; }
.zoom { display: grid; align-items: center; width: 106px; margin: 0 14px; flex: none; }
.zoom > * { grid-area: 1 / 1; }
.zoom select { appearance: none; height: 42px; padding-left: 12px; border-bottom: 1px solid #cacaca; }
.zoom svg { width: 10px; height: 6px; justify-self: end; margin-right: 12px; pointer-events: none; }
.toolbar > .fit { width: 83px; gap: 3px; }
.caret { width: 10px; height: 6px; }
.toolbar > .fit + button { margin: 0 15px 0 2px; }
.share { margin-left: auto; display: flex; }

/* Workspace */
.workspace { flex: 1; min-height: 0; display: flex; }
.left-rail { flex: none; width: 67px; padding-top: 9px; border-right: 1px solid #cacaca; }
.left-rail button { width: 66px; height: 70px; }
.pane-toggle { width: 27px; background: #e9e9e9; }
.pane-toggle svg { width: 10px; height: 16px; }
.pane-toggle.right { width: 28px; border: solid #cacaca; border-width: 0 1px; }
.viewer {
  flex: 1;
  min-width: 0;
  display: grid;
  grid-template-columns: minmax(0, 1fr) 25px;
  grid-template-rows: minmax(0, 1fr) 25px;
}
.page-view { display: flex; gap: 96px; overflow: hidden; background: #fff; }
.col-a, .col-b { flex: none; }
.col-a { width: 296px; }
.col-b { width: 1100px; }
h2 {
  margin: 0;
  display: flex;
  font: bold 50px/58px "Liberation Sans", Arial, sans-serif;
  color: #00f;
  white-space: nowrap;
}
h2:first-child { padding-top: 56px; }
.ref { width: 169px; }
.cut { justify-content: flex-end; }
.cut.wide { width: 161px; }
.cut.narrow { width: 83px; }
.panel { margin: 35px 0 85px 25px; width: 1040px; border: 4px solid #f00; }
.panel.open { margin-left: 0; width: 296px; border-left: 0; }
.panel svg { width: 100%; }
.ink * { vector-effect: non-scaling-stroke; stroke-width: 2.3; stroke-linejoin: round; stroke-linecap: round; }
.ink { fill: none; stroke: #000; }
.ink .b { stroke-width: 3.5; }
.ink .bb { stroke-width: 5.5; }
.leader { stroke: #f00; stroke-width: 7; stroke-linecap: round; }
.halo { stroke: #fff; stroke-width: 11; }
.fig-no { font: 13px "Liberation Sans", Arial, sans-serif; fill: #000; }

.vscroll { display: flex; flex-direction: column; background: #f0f0f0; }
.vscroll button { width: 25px; height: 28px; }
.vtrack { flex: 1; display: grid; grid-template-rows: 76.7% 26px; }
.vtrack i { grid-row: 2; background: #cdcdcd; margin-right: 1px; }
.hscroll { display: flex; background: #f0f0f0; }
.hscroll button { width: 26px; }
.htrack { flex: 1; display: grid; grid-template-columns: 37.5% 1fr; }
.htrack i { grid-column: 2; background: #cdcdcd; }
.arrow { width: 12px; height: 12px; fill: none; stroke: #555; stroke-width: 2px; }
.page-size { width: 175px; background: #e3e3e3; color: #222; font-size: 17px; line-height: 26px; text-align: center; }

.right-rail { flex: none; width: 69px; padding-right: 2px; display: flex; flex-direction: column; background: #fafafa; }
.right-rail button { height: 69px; }
.right-rail .find { box-shadow: inset 0 -1px #cacaca; margin: 0 12px 0 14px; }
.right-rail .partial { height: 36px; align-items: flex-start; padding-top: 17px; overflow: hidden; }
.right-rail .more { height: 37px; margin: 0 12px 0 14px; border-bottom: 1px solid #cacaca; }

/* Taskbar */
.taskbar {
  flex: none;
  height: 60px;
  display: flex;
  background: linear-gradient(90deg, #1e2f3a, #243038 30%, #20303a 45%, #27292e 64%, #1e2f3a 70%, #2b2f32 76%, #1d2d38 84%, #1c2a35);
  color: #fff;
}
.taskbar > button { width: 75px; position: relative; }
.taskbar > .start { width: 72px; }
.taskbar > .cortana { width: 73px; }
.start svg { width: 24px; height: 24px; }
.search {
  flex: none;
  width: 515px;
  display: flex;
  align-items: center;
  gap: 18px;
  padding-left: 16px;
  border: 2px solid #bdbdbd;
  background: #f1f1f1;
  color: #222;
  font-size: 21px;
}
.search svg { width: 24px; height: 24px; fill: none; stroke: #111; stroke-width: 2px; }
.search input { flex: 1; min-width: 0; outline: 0; padding-top: 3px; }
.search input::placeholder { color: #333; opacity: 1; }
.app { width: 36px; height: 36px; }
.running::after {
  content: "";
  position: absolute;
  left: 7px;
  right: 7px;
  bottom: 0;
  height: 3px;
  background: #fbd9ae;
}
.multi::after { background: linear-gradient(90deg, #fbd9ae 47px, #8c7c69 47px, #8c7c69 49px, #c7ac8b 49px); }
.taskbar > .active { width: 73px; margin-left: 1px; background: #4b555d; box-shadow: inset 0 -3px #fbd9ae; }
.tray { margin-left: auto; display: flex; align-items: center; border-right: 1px solid #7d858b; margin-right: 6px; }
.tray button { height: 60px; }
.weather { gap: 17px; font-size: 19px; margin-right: 18px; }
.weather span { padding-top: 3px; }
.weather svg { width: 28px; height: 28px; }
.tray-icon { width: 36px; }
.tray-icon svg { width: 24px; height: 24px; }
.line { fill: none; stroke: #fff; stroke-width: 1.5; }
.clock { flex-direction: column; width: 104px; font-size: 17px; line-height: 28px; }
.notify { width: 72px; padding-right: 13px; position: relative; }
.notify svg { width: 26px; height: 26px; }
.notify b {
  position: absolute;
  left: 28px;
  top: 29px;
  width: 26px;
  height: 26px;
  border: 1px solid #8a8f93;
  border-radius: 50%;
  background: #2b3136;
  font-size: 17px;
  line-height: 24px;
}
```
